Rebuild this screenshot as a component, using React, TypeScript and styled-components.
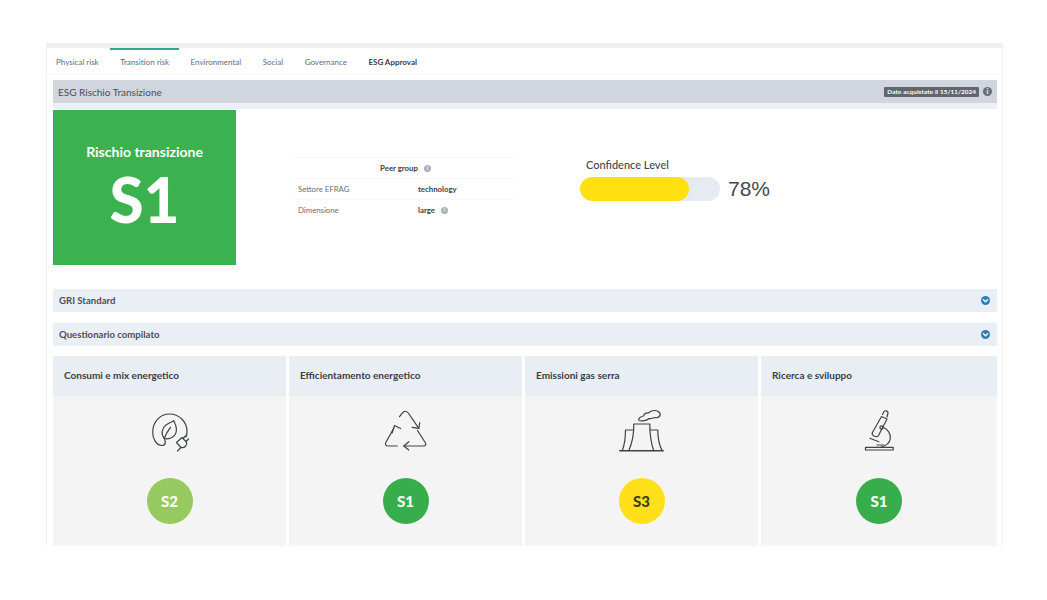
import React from 'react';
import styled, { createGlobalStyle } from 'styled-components';

const GlobalStyle = createGlobalStyle`
  html, body {
    margin: 0;
    padding: 0;
    background: #fff;
    font-family: Lato, "Noto Sans", sans-serif;
    color: #3c4048;
  }
`;

const Page = styled.div`
  width: 1047px;
  height: 600px;
  padding: 43px 0 0 46px;
  box-sizing: border-box;
  overflow: hidden;
`;

const Panel = styled.div`
  width: 957px;
  height: 503px;
  box-sizing: border-box;
  border: 1px solid #f1f2f6;
  border-top: 5px solid #eef0f6;
  border-bottom: 0;
  padding: 0 5px 0 6px;
  overflow: hidden;
`;

const Tabs = styled.div`
  display: flex;
  gap: 1.5px;
  height: 26px;
  margin: 0 -6px 5px -7px;
  border-bottom: 1px solid #f7f8fa;
`;

const Tab = styled.div<{ $active?: boolean; $strong?: boolean }>`
  display: flex;
  align-items: center;
  height: 26px;
  box-sizing: border-box;
  padding: 0 10px;
  font-size: 8px;
  color: ${p => (p.$strong ? '#3c4048' : '#666b74')};
  font-weight: ${p => (p.$strong ? 700 : 400)};
  border-top: 2px solid ${p => (p.$active ? '#2fa98c' : 'transparent')};
`;

const SectionBar = styled.div`
  display: flex;
  align-items: center;
  justify-content: space-between;
  height: 23px;
  padding: 0 5px;
  background: #d0d5de;
  font-size: 10px;
  color: #4b4f57;
`;

const BarStrip = styled.div`
  height: 6px;
  background: #eceff5;
  margin-bottom: 1px;
`;

const Acquired = styled.div`
  display: flex;
  align-items: center;
  gap: 4px;
`;

const Badge = styled.span`
  padding: 1px 3px;
  background: #62666d;
  color: #fff;
  border-radius: 1px;
  font-size: 6.3px;
  line-height: 8px;
  font-weight: 700;
  letter-spacing: 0.1px;
`;

const InfoDot = styled.span<{ $size?: number; $color?: string }>`
  display: inline-flex;
  align-items: center;
  justify-content: center;
  box-sizing: border-box;
  width: ${p => p.$size ?? 9}px;
  height: ${p => p.$size ?? 9}px;
  border-radius: 50%;
  background: ${p => p.$color ?? '#6b7077'};
  color: #fff;
  font-size: ${p => (p.$size ?? 9) - 2}px;
  line-height: 1;
  font-weight: 700;
`;

const Summary = styled.div`
  display: flex;
  height: 155px;
  margin-bottom: 24px;
`;

const RiskBox = styled.div`
  display: flex;
  flex-direction: column;
  align-items: center;
  width: 183px;
  flex: none;
  background: #3cb14f;
  color: #fff;
  padding-top: 33px;
  box-sizing: border-box;
`;

const RiskTitle = styled.div`
  font-size: 14px;
  line-height: 17px;
  font-weight: 700;
`;

const RiskValue = styled.div`
  margin-top: 9px;
  font-size: 62px;
  line-height: 60px;
  font-weight: 900;
`;

const PeerTable = styled.div`
  width: 218px;
  margin: 47px 0 0 59px;
  flex: none;
`;

const PeerRow = styled.div<{ $centered?: boolean }>`
  display: flex;
  align-items: center;
  justify-content: ${p => (p.$centered ? 'center' : 'flex-start')};
  height: 21px;
  padding-left: 3px;
  box-sizing: border-box;
  border-top: 1px solid #f5f6f8;
  font-size: 7.8px;
  color: #6a6e76;
`;

const PeerLabel = styled.span`
  width: 120px;
`;

const PeerValue = styled.span`
  display: inline-flex;
  align-items: center;
  gap: 6px;
  font-weight: 700;
  color: #3c4048;
`;

const Confidence = styled.div`
  margin: 47px 0 0 67px;
`;

const ConfidenceTitle = styled.div`
  margin-left: 6px;
  font-size: 11px;
  line-height: 16px;
  color: #42464d;
  font-weight: 500;
`;

const ConfidenceRow = styled.div`
  display: flex;
  align-items: center;
  gap: 8px;
  margin-top: 4px;
`;

const Track = styled.div`
  width: 140px;
  height: 24px;
  border-radius: 12px;
  background: #e6ebf3;
  overflow: hidden;
`;

const Fill = styled.div`
  height: 100%;
  border-radius: 12px;
  background: #ffe110;
`;

const Percent = styled.div`
  font-family: "Liberation Sans", Arial, sans-serif;
  font-size: 21px;
  color: #45484e;
`;

const Accordion = styled.div`
  display: flex;
  align-items: center;
  justify-content: space-between;
  height: 23px;
  margin-bottom: 11px;
  padding: 0 7px 0 6px;
  background: #eaeef5;
  font-size: 9.6px;
  font-weight: 700;
  color: #4b4f57;
`;

const ChevronDot = styled.span`
  display: flex;
  align-items: center;
  justify-content: center;
  width: 9px;
  height: 9px;
  border-radius: 50%;
  background: #2f7fb8;
`;

const Cards = styled.div`
  display: grid;
  grid-template-columns: 233px 233px 233px 236px;
  gap: 3px;
  margin-top: -1px;
`;

const Card = styled.div`
  display: flex;
  flex-direction: column;
  height: 190px;
  background: #f4f4f5;
`;

const CardHead = styled.div`
  display: flex;
  align-items: center;
  height: 40px;
  flex: none;
  box-sizing: border-box;
  padding: 0 0 2px 11px;
  background: #e9edf4;
  font-size: 10px;
  font-weight: 700;
  color: #3a3e45;
`;

const IconWrap = styled.div`
  display: flex;
  justify-content: center;
  height: 46px;
  margin-top: 12px;
  color: #3f4247;
`;

const Score = styled.div<{ $bg: string; $fg: string }>`
  display: flex;
  align-items: center;
  justify-content: center;
  width: 46px;
  height: 46px;
  margin: 24px auto 0;
  border-radius: 50%;
  background: ${p => p.$bg};
  color: ${p => p.$fg};
  font-size: 15px;
  font-weight: 900;
`;

const LeafPlugIcon = () => (
  <svg width="46" height="46" viewBox="0 0 46 46" fill="none" stroke="currentColor" strokeWidth="1.2" strokeLinecap="round" strokeLinejoin="round">
    <path d="M17 30 C19 33 19 37 15.5 37.5 C9 38 5.5 30 5.7 23.7 C6 14 13 6 22.5 6 C32 6 40 13.5 40 23.5 C40 25.5 39.7 27.5 39 29" />
    <path d="M17.3 30.3 C13.5 26 15 20 19 17 C22 15 25 14 26.7 12.7 C29 17 30.5 22 28.5 26 C26 30.5 21 31.5 17.3 30.3 Z" />
    <path d="M17.3 30.3 C19 26 20.5 23 23.5 19.5" />
    <path d="M29.5 34.5 L35 29.5 L39.5 34 C40.5 37 37.5 40.5 34 39.5 Z" />
    <path d="M33.5 40 L30.5 43 M36 30.5 L38.5 28 M39 33.5 L41.5 31" />
  </svg>
);

const RecycleIcon = () => (
  <svg width="46" height="46" viewBox="0 0 46 46" fill="none" stroke="currentColor" strokeWidth="1.2" strokeLinecap="round" strokeLinejoin="round">
    <path d="M10.8 20.3 L2.8 34.5 C1.8 36.5 3 38 5 38 L14.2 38" />
    <path d="M9 25 L11.5 17.5 L17.5 20.5" />
    <path d="M16.5 8.7 L19.5 4.8 C21 3 24 3 25.3 5 L35.8 20.3" />
    <path d="M29.1 19.3 L35.8 20.3 L36.8 14.6" />
    <path d="M34.5 22.5 L42.5 35 C43.3 36.6 42.2 38 40.5 38 L20.8 38" />
    <path d="M25.8 33.7 L20.8 38 L25.8 42" />
  </svg>
);

const TowerIcon = () => (
  <svg width="46" height="46" viewBox="0 0 46 46" fill="none" stroke="currentColor" strokeWidth="1.2" strokeLinecap="round" strokeLinejoin="round">
    <path d="M0.8 42.7 L44.2 42.7" strokeWidth="1.5" />
    <path d="M9.8 42.7 C13.5 34 15 25 14.8 16 L30.8 16 C30.8 25 31.5 34 34.8 42.7" />
    <path d="M14.5 22 L6.5 22 C6.5 30 5.5 37 3.2 42.7" />
    <path d="M31 22 L38.8 22 C38.8 30 40 37 43.2 42.7" />
    <path d="M20 12.5 C18.5 10.5 22 8.5 24.5 8 C25 5.5 27.5 4.5 29.5 5 C32 2 38 1.5 40.5 4.5 C42.5 7.5 39.5 10.5 36 9.5 C34 9.5 33 11 30 10.5 C28 12.5 23 13.5 20 12.5 Z" />
  </svg>
);

const MicroscopeIcon = () => (
  <svg width="46" height="46" viewBox="0 0 46 46" fill="none" stroke="currentColor" strokeWidth="1.2" strokeLinecap="round" strokeLinejoin="round">
    <path d="M9.5 39.3 L37.2 39.3 L37.2 42 L9.5 42 Z" />
    <path d="M16.2 25 L25.5 8.5 L31 11 L22.5 27.5 C21 30 15.5 28 16.2 25 Z" />
    <path d="M26.5 6.5 L28 3.5 C29 2 32 3 32 5 L31 9" />
    <path d="M27.5 19.5 C32 21.5 35 26 34.3 30.5 C33.8 35 30 38 24.5 39.3" />
    <path d="M13.8 30.3 L22.8 33.7" />
    <path d="M21 37 L28 37" />
    <circle cx="25.5" cy="19.5" r="1.6" />
  </svg>
);

const Chevron = () => (
  <svg width="7" height="7" viewBox="0 0 8 8" fill="none" stroke="#fff" strokeWidth="1.6" strokeLinecap="round" strokeLinejoin="round">
    <path d="M1.5 3 L4 5.5 L6.5 3" />
  </svg>
);

const categories = [
  { title: 'Consumi e mix energetico', score: 'S2', bg: '#96c95f', fg: '#fff', Icon: LeafPlugIcon },
  { title: 'Efficientamento energetico', score: 'S1', bg: '#37ae4b', fg: '#fff', Icon: RecycleIcon },
  { title: 'Emissioni gas serra', score: 'S3', bg: '#ffe01a', fg: '#3f3d20', Icon: TowerIcon },
  { title: 'Ricerca e sviluppo', score: 'S1', bg: '#37ae4b', fg: '#fff', Icon: MicroscopeIcon },
];

const tabs = ['Physical risk', 'Transition risk', 'Environmental', 'Social', 'Governance', 'ESG Approval'];

const App = () => (
  <Page>
    <GlobalStyle />
    <Panel>
      <Tabs>
        {tabs.map(tab => (
          <Tab key={tab} $active={tab === 'Transition risk'} $strong={tab === 'ESG Approval'}>
            {tab}
          </Tab>
        ))}
      </Tabs>
      <SectionBar>
        ESG Rischio Transizione
        <Acquired>
          <Badge>Dato acquistato il 15/11/2024</Badge>
          <InfoDot>i</InfoDot>
        </Acquired>
      </SectionBar>
      <BarStrip />
      <Summary>
        <RiskBox>
          <RiskTitle>Rischio transizione</RiskTitle>
          <RiskValue>S1</RiskValue>
        </RiskBox>
        <PeerTable>
          <PeerRow $centered>
            <PeerValue>
              Peer group <InfoDot $size={7} $color="#aab0b8">i</InfoDot>
            </PeerValue>
          </PeerRow>
          <PeerRow>
            <PeerLabel>Settore EFRAG</PeerLabel>
            <PeerValue>technology</PeerValue>
          </PeerRow>
          <PeerRow>
            <PeerLabel>Dimensione</PeerLabel>
            <PeerValue>
              large <InfoDot $size={7} $color="#aab0b8">i</InfoDot>
            </PeerValue>
          </PeerRow>
        </PeerTable>
        <Confidence>
          <ConfidenceTitle>Confidence Level</ConfidenceTitle>
          <ConfidenceRow>
            <Track>
              <Fill style={{ width: '78%' }} />
            </Track>
            <Percent>78%</Percent>
          </ConfidenceRow>
        </Confidence>
      </Summary>
      <Accordion>
        GRI Standard
        <ChevronDot><Chevron /></ChevronDot>
      </Accordion>
      <Accordion>
        Questionario compilato
        <ChevronDot><Chevron /></ChevronDot>
      </Accordion>
      <Cards>
        {categories.map(({ title, score, bg, fg, Icon }) => (
          <Card key={title}>
            <CardHead>{title}</CardHead>
            <IconWrap><Icon /></IconWrap>
            <Score $bg={bg} $fg={fg}>{score}</Score>
          </Card>
        ))}
      </Cards>
    </Panel>
  </Page>
);

export default App;
